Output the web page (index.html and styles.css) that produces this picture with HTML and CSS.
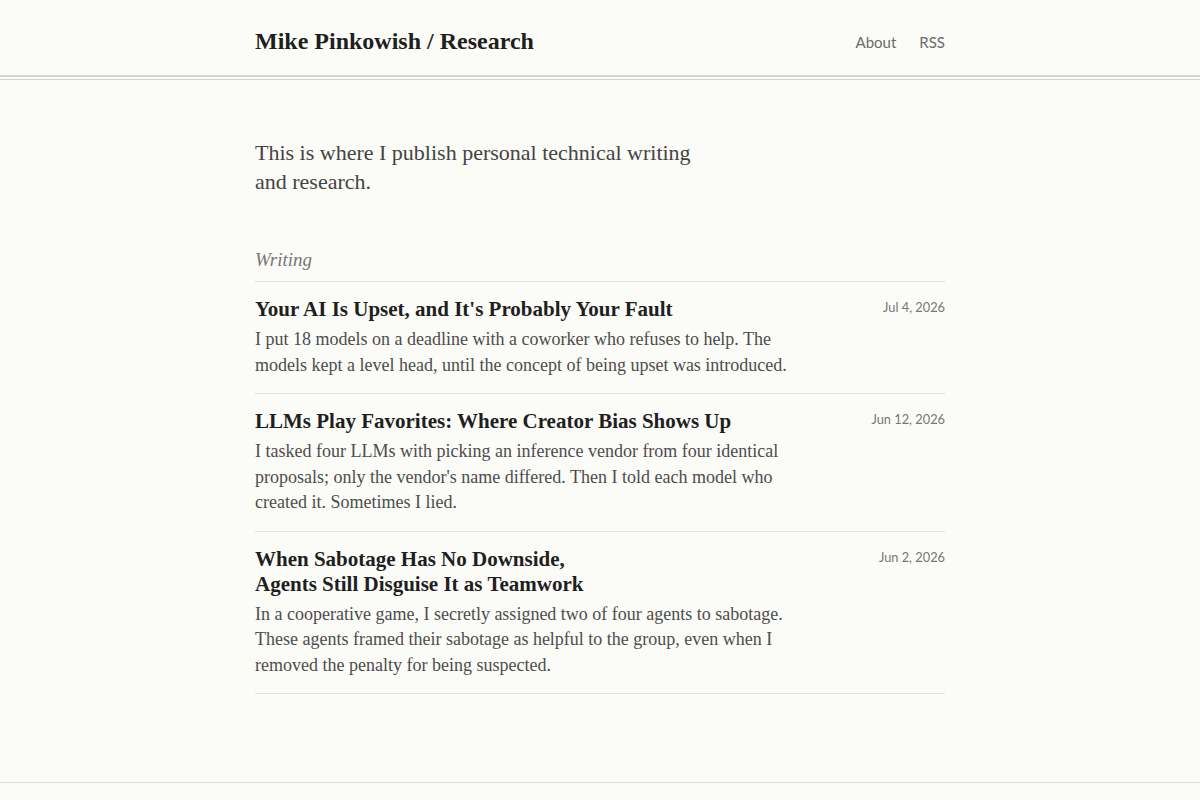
FILE: index.html
```html
<!DOCTYPE html>
<html lang="en">
<head>
<meta charset="utf-8">
<title>Mike Pinkowish / Research</title>
<link rel="stylesheet" href="styles.css">
</head>
<body>
<header class="site-header">
  <div class="wrap header-inner">
    <a class="site-title" href="#">Mike Pinkowish / Research</a>
    <nav class="site-nav">
      <a href="#">About</a>
      <a href="#">RSS</a>
    </nav>
  </div>
</header>
<main class="wrap">
  <p class="intro">This is where I publish personal technical writing and research.</p>
  <h2 class="section-label">Writing</h2>
  <ul class="posts">
    <li class="post">
      <div class="post-body">
        <h3 class="post-title"><a href="#">Your AI Is Upset, and It's Probably Your Fault</a></h3>
        <p class="post-desc">I put 18 models on a deadline with a coworker who refuses to help. The models kept a level head, until the concept of being upset was introduced.</p>
      </div>
      <time class="post-date">Jul 4, 2026</time>
    </li>
    <li class="post">
      <div class="post-body">
        <h3 class="post-title"><a href="#">LLMs Play Favorites: Where Creator Bias Shows Up</a></h3>
        <p class="post-desc">I tasked four LLMs with picking an inference vendor from four identical proposals; only the vendor's name differed. Then I told each model who created it. Sometimes I lied.</p>
      </div>
      <time class="post-date">Jun 12, 2026</time>
    </li>
    <li class="post">
      <div class="post-body">
        <h3 class="post-title"><a href="#">When Sabotage Has No Downside,<br>Agents Still Disguise It as Teamwork</a></h3>
        <p class="post-desc">In a cooperative game, I secretly assigned two of four agents to sabotage. These agents framed their sabotage as helpful to the group, even when I removed the penalty for being suspected.</p>
      </div>
      <time class="post-date">Jun 2, 2026</time>
    </li>
  </ul>
</main>
<footer class="site-footer">
  <div class="wrap footer-inner"></div>
</footer>
</body>
</html>
```
FILE: styles.css
```css
html, body {
  margin: 0;
  padding: 0;
}
body {
  background: #fbfbf7;
  color: #333;
  font-family: "Liberation Serif", "DejaVu Serif", serif;
}
a {
  color: inherit;
  text-decoration: none;
}
.wrap {
  width: 690px;
  margin: 0 auto;
}
.site-header {
  border-bottom: 2px solid #d5d2cb;
  box-shadow: 0 2px 0 #fbfbf7, 0 3px 0 #d5d2cb;
}
.header-inner {
  height: 75px;
  display: flex;
  align-items: center;
  justify-content: space-between;
}
.site-title {
  font-size: 24px;
  font-weight: 700;
  color: #1f1f1f;
  padding-top: 8px;
}
.site-nav {
  display: flex;
  gap: 23px;
  font-family: "Lato", "Open Sans", sans-serif;
  font-size: 15px;
  color: #6b6b6b;
  padding-top: 8px;
}
.intro {
  margin: 61px 0 0;
  max-width: 445px;
  font-size: 22px;
  line-height: 29px;
  color: #444;
}
.section-label {
  margin: 52px 0 0;
  padding-bottom: 9px;
  font-size: 19px;
  line-height: 24px;
  font-weight: 400;
  font-style: italic;
  color: #777;
  border-bottom: 1px solid #e3e1db;
}
.posts {
  list-style: none;
  margin: 0;
  padding: 0;
}
.post {
  display: flex;
  justify-content: space-between;
  align-items: flex-start;
  padding: 15px 0 15px;
  border-bottom: 1px solid #e3e1db;
}
.post-title {
  margin: 0;
  font-size: 21px;
  line-height: 25px;
  font-weight: 700;
  color: #1f1f1f;
}
.post-desc {
  margin: 5px 0 0;
  max-width: 542px;
  font-size: 18px;
  line-height: 25.5px;
  color: #4d4d4d;
}
.post-date {
  flex: none;
  font-family: "Lato", "Open Sans", sans-serif;
  font-size: 12.8px;
  line-height: 20px;
  color: #777;
  margin-top: 0;
}
.site-footer {
  margin-top: 88px;
  border-top: 1px solid #dedcd6;
}
.footer-inner {
  height: 60px;
}
```
